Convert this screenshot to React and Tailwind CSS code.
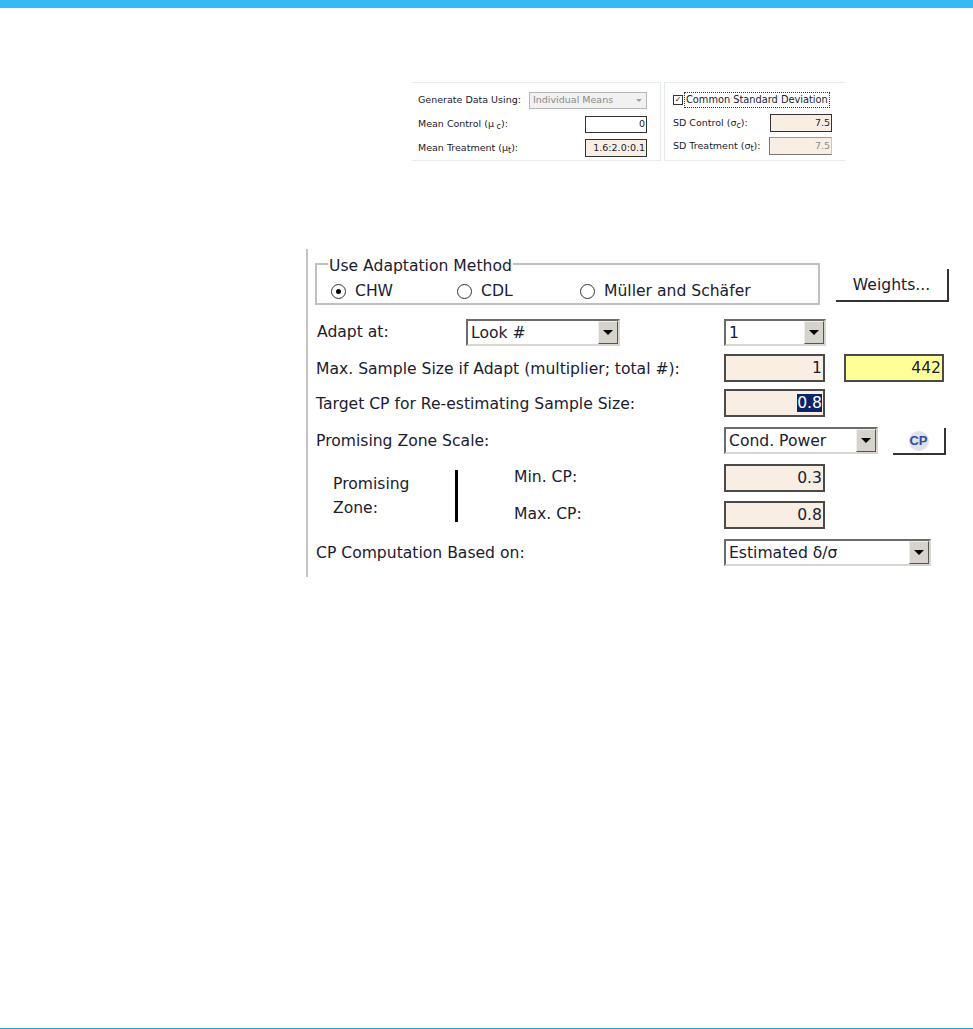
const INPUT = 'h-[28px] w-[101px] border-2 border-[#4a4a4a] bg-[#f9eee4] text-right pr-[1px] leading-[24px] text-[#1a2030]'

function Select({ value, width }) {
  return (
    <div className={`h-[27px] ${width} flex items-center justify-between border-2 border-t-[#6b6b6b] border-l-[#6b6b6b] border-r-[#d8d5ce] border-b-[#d8d5ce] bg-white pl-[3px]`}>
      <span className="mt-[2px] text-[#1a2030] whitespace-nowrap">{value}</span>
      <span className="w-[20px] h-[23px] flex items-center justify-center bg-[#d6d3cc] border border-t-[#eeeeea] border-l-[#eeeeea] border-r-[#55554f] border-b-[#55554f]">
        <span className="w-0 h-0 border-x-[5px] border-x-transparent border-t-[5px] border-t-black" />
      </span>
    </div>
  )
}

function Radio({ label, checked, width }) {
  return (
    <div className={`flex items-center gap-[9px] ${width}`}>
      <span className="w-[15px] h-[15px] rounded-full border border-[#333] flex items-center justify-center">
        {checked && <span className="w-[5px] h-[5px] rounded-full bg-black" />}
      </span>
      <span>{label}</span>
    </div>
  )
}

function SmallInput({ value, width, height, bg, muted }) {
  return (
    <div className={`${height} ${width} ${bg} flex items-center justify-end pr-[1px] border ${muted ? 'border-t-[#9a9a9a] border-l-[#777] border-r-[#c8c8c8] border-b-[#777] text-[#8a8a8a]' : 'border-[#333] text-[#1a2030]'}`}>
      {value}
    </div>
  )
}

export default function App() {
  return (
    <div className="relative h-[1029px] w-[973px] overflow-hidden bg-white font-['DejaVu_Sans',sans-serif] text-[#1a2030]">
      <div className="h-[8px] bg-[#36b9f5]" />

      {/* Simulation parameters */}
      <div className="mt-[74px] ml-[412px] flex gap-[3px] text-[9.5px]">
        <div className="h-[79px] w-[249px] border-t border-r border-b border-[#e6e9ee] pt-[9px] pl-[6px] pr-[13px]">
          <div className="flex h-[17px] items-center justify-between">
            <span>Generate Data Using:</span>
            <div className="h-[17px] w-[118px] flex items-center justify-between border border-[#b5b5b5] bg-[#f1f1f1] pl-[3px] pr-[4px] text-[#8a8a8a]">
              <span>Individual Means</span>
              <span className="w-0 h-0 border-x-[3px] border-x-transparent border-t-[3px] border-t-[#a0a0a0]" />
            </div>
          </div>
          <div className="mt-[7px] flex h-[17px] items-center justify-between">
            <span>Mean Control (μ<sub className="text-[8px]"> c</sub>):</span>
            <SmallInput value="0" width="w-[62px]" height="h-[17px]" bg="bg-white" />
          </div>
          <div className="mt-[6px] flex h-[18px] items-center justify-between">
            <span>Mean Treatment (μ<sub className="text-[8px]">t</sub>):</span>
            <SmallInput value="1.6:2.0:0.1" width="w-[62px]" height="h-[18px]" bg="bg-[#f9eee4]" />
          </div>
        </div>

        <div className="h-[79px] w-[181px] border-t border-l border-b border-[#e6e9ee] pt-[9px] pl-[8px]">
          <div className="flex h-[16px] items-center">
            <span className="w-[10px] h-[10px] border border-[#333] flex items-center justify-center text-[8px] font-bold leading-none">✓</span>
            <span className="ml-[1px] border border-dotted border-[#333] px-[1px] text-[9.8px] whitespace-nowrap">Common Standard Deviation</span>
          </div>
          <div className="mt-[6px] flex h-[18px] w-[159px] items-center justify-between">
            <span>SD Control (σ<sub className="text-[8px]">c</sub>):</span>
            <SmallInput value="7.5" width="w-[62px]" height="h-[18px]" bg="bg-[#f9eee4]" />
          </div>
          <div className="mt-[5px] flex h-[18px] w-[159px] items-center justify-between">
            <span className="whitespace-nowrap">SD Treatment (σ<sub className="text-[8px]">t</sub>):</span>
            <SmallInput value="7.5" width="w-[63px]" height="h-[18px]" bg="bg-[#f9eee4]" muted />
          </div>
        </div>
      </div>

      {/* Adaptation panel */}
      <div className="mt-[88px] ml-[306px] h-[328px] w-[650px] border-l-2 border-[#c4c4c4] pt-[7px] pl-[7px] text-[15.6px]">
        <div className="flex items-end">
          <fieldset className="h-[49px] w-[505px] border-2 border-[#c0c0c0] pl-[11px]">
            <legend className="px-[1px] leading-[15px]"><span className="relative top-[3px]">Use Adaptation Method</span></legend>
            <div className="mt-[9px] flex h-[24px] items-center pl-[3px]">
              <Radio label="CHW" checked width="w-[126px]" />
              <Radio label="CDL" width="w-[123px]" />
              <Radio label="Müller and Schäfer" />
            </div>
          </fieldset>
          <button className="ml-[16px] mb-[3px] h-[33px] w-[113px] border-r-2 border-b-2 border-[#333] bg-white pt-[2px] text-center">Weights...</button>
        </div>

        <div className="mt-[14px] flex h-[27px] items-center">
          <span className="w-[151px] pl-[2px]">Adapt at:</span>
          <Select value="Look #" width="w-[154px]" />
          <div className="ml-[104px]"><Select value="1" width="w-[102px]" /></div>
        </div>

        <div className="mt-[8px] flex h-[28px] items-center">
          <span className="mt-[3px] w-[409px] pl-[1px]">Max. Sample Size if Adapt (multiplier; total #):</span>
          <div className={INPUT}>1</div>
          <div className="ml-[19px] h-[28px] w-[100px] border-2 border-[#4a4a4a] bg-[#ffff99] text-right pr-[1px] leading-[24px]">442</div>
        </div>

        <div className="mt-[7px] flex h-[28px] items-center">
          <span className="mt-[3px] w-[409px] pl-[1px]">Target CP for Re-estimating Sample Size:</span>
          <div className={INPUT}><span className="bg-[#0a246a] text-white">0.8</span></div>
        </div>

        <div className="mt-[10px] flex h-[27px] items-center">
          <span className="mt-[2px] w-[409px] pl-[1px]">Promising Zone Scale:</span>
          <Select value="Cond. Power" width="w-[154px]" />
          <button className="ml-[15px] mt-[2px] h-[27px] w-[53px] flex items-center justify-center border-r-2 border-b-2 border-[#333] bg-white">
            <span className="w-[20px] h-[20px] rounded-full bg-[#dfe1ec] text-[#2f4d9e] text-[13px] font-bold leading-[20px] font-['Liberation_Sans',sans-serif]">CP</span>
          </button>
        </div>

        <div className="mt-[10px] flex h-[64px]">
          <div className="w-[140px] pl-[18px] pt-[5px] leading-[24px]">
            <div className="mt-[3px]">Promising</div>
            <div>Zone:</div>
          </div>
          <div className="mt-[6px] h-[52px] w-[3px] bg-black" />
          <div className="ml-[56px] w-[210px] pt-[1px]">
            <div className="h-[27px] leading-[24px]">Min. CP:</div>
            <div className="mt-[10px] leading-[24px]">Max. CP:</div>
          </div>
          <div>
            <div className={INPUT}>0.3</div>
            <div className={`${INPUT} mt-[9px]`}>0.8</div>
          </div>
        </div>

        <div className="mt-[11px] flex h-[27px] items-center">
          <span className="mt-[2px] w-[409px] pl-[1px]">CP Computation Based on:</span>
          <Select value="Estimated δ/σ" width="w-[207px]" />
        </div>
      </div>

      <div className="absolute inset-x-0 bottom-0 h-[1px] bg-[#1ba0d8]" />
    </div>
  )
}
